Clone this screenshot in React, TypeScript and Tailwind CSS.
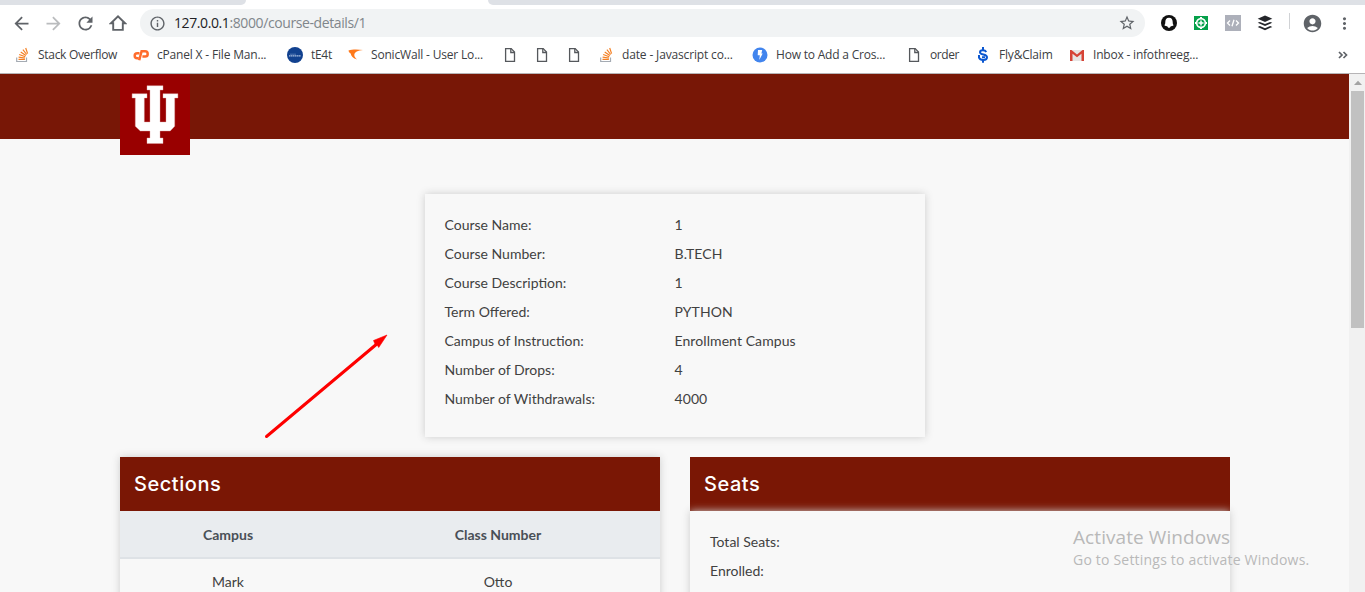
import React from "react";
import {
  MdAccountCircle,
  MdArrowBack,
  MdArrowForward,
  MdInfoOutline,
  MdMoreVert,
  MdRefresh,
  MdStarBorder,
} from "react-icons/md";

const StackIcon = () => (
  <svg viewBox="0 0 16 16" className="size-4" fill="none">
    <path d="M2.700 10.500v4h9.800v-4" stroke="#a5abb3" strokeWidth="1.200" />
    <path d="M4.500 12.400h6.400M4.600 10.100l6.400.9M5.200 7.500l6.100 2.300M6.700 4.900l5.200 3.700M8.900 2.700l3.800 4.800M11.700 1l1.900 5.600" stroke="#f48024" strokeWidth="1.200" />
  </svg>
);

const CpanelIcon = () => (
  <svg viewBox="0 0 16 16" className="size-4" fill="none" stroke="#ff6c2c" strokeWidth="2.500">
    <path d="M6.500 6.200H4.200a2.500 2.500 0 0 0 0 5h1.500" />
    <path d="M6.200 13.300 8.600 4.300h3.500a2.600 2.600 0 0 1 0 5.200H9.400" />
  </svg>
);

const Te4tIcon = () => (
  <svg viewBox="0 0 16 16" className="size-4">
    <circle cx="8" cy="8" r="8" fill="#11418f" />
    <path d="M2 8.800h12" stroke="#a9bedf" strokeWidth="1.200" strokeDasharray="1.500 .4" />
    <path d="M3 7.200h6" stroke="#5f83bd" strokeWidth=".8" />
  </svg>
);

const SonicIcon = () => (
  <svg viewBox="0 0 16 16" className="size-4">
    <path d="M1.500 3.500C5 2.200 11 2.200 16 3.100 11 3.600 7.300 5 7.300 8.100c0 1.600 1 3.200 2.900 4.500C6 11.300 3.900 9.200 3.700 6.600 2.500 6 1.700 4.800 1.500 3.500Z" fill="#ff791a" />
  </svg>
);

const FileIcon = () => (
  <svg viewBox="0 0 16 16" className="size-4" fill="none" stroke="#55585c" strokeWidth="1.300">
    <path d="M3.600 1.600h5.600l3.300 3.500v9.300H3.600Z" />
    <path d="M8.800 1.600v3.900h3.700" />
  </svg>
);

const BoltIcon = () => (
  <svg viewBox="0 0 16 16" className="size-4">
    <circle cx="8" cy="8" r="7.500" fill="#4285ee" />
    <path d="M6 3h4.200L9.400 6.400h1.300L7.300 13l.5-4.700H5.700Z" fill="#fff" />
  </svg>
);

const DollarIcon = () => (
  <svg viewBox="0 0 16 16" className="size-4" fill="none" stroke="#0b57d0">
    <path d="M11.300 4.900C9.900 2.600 5 2.700 5 5.200c0 3.300 7 1.300 7 5 0 3.600-6.700 3.700-8 .5V8" strokeWidth="2" />
    <path d="M8 0v3M8 12.500v3.200M7 10.200h3" strokeWidth="2" />
  </svg>
);

const MailIcon = () => (
  <svg viewBox="0 0 16 16" className="size-4">
    <path d="M1 3h14v11H1Z" fill="#e7e5e4" />
    <path d="M1 14V3h1.500L8 7.600 13.500 3H15v11h-2.500V6.700L8 10.300 3.500 6.700V14Z" fill="#d64336" />
  </svg>
);

type Bookmark = { icon: React.FC; label?: string; text?: string };

const bookmarks: Bookmark[] = [
  { icon: StackIcon, label: "Stack Overflow", text: "w-[79px] tracking-[-0.3px]" },
  { icon: CpanelIcon, label: "cPanel X - File Man...", text: "w-[114px] tracking-[-0.18px]" },
  { icon: Te4tIcon, label: "tE4t", text: "w-[20px] tracking-[-0.3px]" },
  { icon: SonicIcon, label: "SonicWall - User Lo...", text: "w-[115px] tracking-[-0.18px]" },
  { icon: FileIcon },
  { icon: FileIcon },
  { icon: FileIcon },
  { icon: StackIcon, label: "date - Javascript co...", text: "w-[114px] tracking-[-0.15px]" },
  { icon: BoltIcon, label: "How to Add a Cros...", text: "w-[114px] tracking-[-0.2px]" },
  { icon: FileIcon, label: "order", text: "w-[29px] tracking-[-0.4px]" },
  { icon: DollarIcon, label: "Fly&Claim", text: "w-[54px] tracking-[-0.2px]" },
  { icon: MailIcon, label: "Inbox - infothreeg...", text: "w-[105px] tracking-[-0.2px]" },
];

const courseRows = [
  ["Course Name:", "1"],
  ["Course Number:", "B.TECH"],
  ["Course Description:", "1"],
  ["Term Offered:", "PYTHON"],
  ["Campus of Instruction:", "Enrollment Campus"],
  ["Number of Drops:", "4"],
  ["Number of Withdrawals:", "4000"],
];

function Slot({ children }: { children: React.ReactNode }) {
  return <div className="flex w-8 shrink-0 items-center justify-center">{children}</div>;
}

function BrowserBar() {
  return (
    <div className="flex h-[74px] flex-col border-b border-[#b6b4b6] bg-white font-['Open_Sans',sans-serif]">
      <div className="flex h-[5px] shrink-0 justify-between">
        <div className="w-[246px] rounded-br-[6px] bg-[#dee1e6]" />
        <div className="w-[877px] rounded-bl-[6px] bg-[#dee1e6]" />
      </div>
      <div className="flex h-9 shrink-0 items-center pl-[5px] text-[#5f6368]">
        <Slot><MdArrowBack size={21} /></Slot>
        <Slot><MdArrowForward size={21} className="text-[#babcbe]" /></Slot>
        <Slot><MdRefresh size={21} /></Slot>
        <Slot>
          <svg viewBox="0 0 18 18" className="ml-0.5 size-[18px]" fill="none" stroke="currentColor" strokeWidth="1.900">
            <path d="M2 9.200 9 2.300l7 6.900h-2.200v6.700H4.200V9.200Z" />
          </svg>
        </Slot>
        <div className="ml-[7px] flex h-7 w-[1005px] shrink-0 items-center rounded-full bg-[#f1f3f4] pr-[9px] pl-[9px]">
          <MdInfoOutline size={17} />
          <div className="ml-2 flex-1 text-[14px] leading-none tracking-[-0.4px] whitespace-nowrap text-[#80868b]">
            <span className="text-[#202124]">127.0.0.1</span>:8000/course-details/1
          </div>
          <MdStarBorder size={18} />
        </div>
        <div className="ml-2 flex shrink-0">
          <Slot>
            <svg viewBox="0 0 16 16" className="size-4">
              <circle cx="8" cy="8" r="8" fill="#111" />
              <path d="M8 2.700c2.700 0 3.700 2 3.700 4.300 0 1.700.4 2.600 1 3.300-.9.6-1.800.8-2.900 1-.4.800-.8 1.500-1.800 1.500s-1.400-.7-1.800-1.500c-1.100-.2-2-.4-2.900-1C3.900 9.600 4.300 8.700 4.300 7c0-2.300 1-4.300 3.700-4.300Z" fill="#fff" />
            </svg>
          </Slot>
          <Slot>
            <svg viewBox="0 0 14 14" className="size-3.5">
              <path d="M0 0h14v14H0Z" fill="#05a04a" />
              <circle cx="7" cy="7" r="5.200" fill="#fff" />
              <path d="M7 1v1M7 12v1M1 7h1M12 7h1" stroke="#fff" strokeWidth="2" />
              <circle cx="7" cy="7" r="3.500" fill="#05a04a" />
              <path d="M7 4.500v5M4.500 7h5" stroke="#fff" strokeWidth="1.500" />
            </svg>
          </Slot>
          <Slot>
            <svg viewBox="0 0 16 16" className="size-4" fill="none">
              <path d="M0 0h16v16H0Z" fill="#adb0ba" />
              <path d="M5 5.500 2.500 8 5 10.500M11 5.500 13.500 8 11 10.500M9 4.700 7 11.300" stroke="#fff" strokeWidth="1.300" />
            </svg>
          </Slot>
          <Slot>
            <svg viewBox="0 0 16 16" className="size-4" fill="#24262b">
              <path d="m8 .5 7.300 3.200L8 7 .7 3.700Z" />
              <path d="m.7 7.800 2.100-.9L8 9.100l5.200-2.200 2.100.9L8 11.100Z" />
              <path d="m.7 11.900 2.100-.9L8 13.200l5.200-2.200 2.100.9L8 15.300Z" />
            </svg>
          </Slot>
          <div className="flex w-[15px] justify-end pr-1.5"><div className="h-4 w-px bg-[#d0d2d5]" /></div>
          <Slot><MdAccountCircle size={21} /></Slot>
          <Slot><MdMoreVert size={19} /></Slot>
        </div>
      </div>
      <div className="flex h-7 shrink-0 items-center gap-4 pl-3.5 text-[12px] leading-4 text-[#3c4043]">
        {bookmarks.map(({ icon: Icon, label, text }, i) => (
          <div key={i} className="flex shrink-0 items-center gap-2">
            <Icon />
            {label && <span className={`whitespace-nowrap ${text}`}>{label}</span>}
          </div>
        ))}
        <svg viewBox="0 0 10 8" className="mr-[17px] ml-auto h-2 w-2.5" fill="none" stroke="#5f6368" strokeWidth="1.700">
          <path d="m1 1 3 3-3 3M5.500 1l3 3-3 3" />
        </svg>
      </div>
    </div>
  );
}

function Logo() {
  return (
    <svg viewBox="0 0 70 81" className="h-[81px] w-[70px]">
      <path d="M0 0h70v81H0Z" fill="#990000" />
      <path
        d="M27 11.700h16v4.300h-3v32h6V24h-3v-4.300h14.900V24h-3.200v28.300L50.200 57H40v7h3v5.500H27V64h3v-7H20.300l-5-4.700V24h-3.200v-4.300H27V24h-2.700v24H30V16h-3Z"
        fill="#fff"
        stroke="#e0a8a8"
        strokeWidth=".4"
      />
    </svg>
  );
}

function PanelTitle({ children }: { children: React.ReactNode }) {
  return (
    <h2 className="flex h-[54px] items-center bg-[#7a1705] px-3.5 font-['Inter',sans-serif] text-[20px] font-medium tracking-[0.55px] text-white">
      {children}
    </h2>
  );
}

function CoursePage() {
  return (
    <main className="flex w-[1349px] shrink-0 flex-col overflow-hidden bg-[#f8f8f8] font-['Lato',sans-serif] text-[14px] text-[#414141]">
      <header className="h-[65px] shrink-0 bg-[#781706] pl-[120px]">
        <Logo />
      </header>
      <section className="mx-auto mt-[55px] h-[243px] w-[500px] shrink-0 bg-[#f8f8f8] px-5 pt-4 shadow-[0_0_8px_#ccc]">
        {courseRows.map(([name, value]) => (
          <div key={name} className="flex h-[29px] items-center">
            <span className="w-[230px]">{name}</span>
            <span className="tracking-[0.08px]">{value}</span>
          </div>
        ))}
      </section>
      <div className="mt-5 flex gap-[30px] pl-[120px]">
        <section className="h-[300px] w-[540px] shadow-[0_0_8px_#ccc]">
          <PanelTitle>Sections</PanelTitle>
          <div className="grid h-12 grid-cols-[216px_324px] items-center border-b-2 border-[#dee2e6] bg-[#e9ecef] text-center font-bold text-[#495057]">
            <span>Campus</span>
            <span>Class Number</span>
          </div>
          <div className="grid h-11 grid-cols-[216px_324px] items-center text-center">
            <span>Mark</span>
            <span>Otto</span>
          </div>
        </section>
        <section className="w-[540px]">
          <PanelTitle>Seats</PanelTitle>
          <div className="h-[240px] bg-[#f8f8f8] px-5 pt-4 shadow-[0_0_8px_#ccc]">
            <div className="flex h-[29px] items-center">Total Seats:</div>
            <div className="flex h-[29px] items-center">Enrolled:</div>
          </div>
        </section>
      </div>
    </main>
  );
}

export default function App() {
  return (
    <div className="relative flex h-[592px] w-[1365px] flex-col overflow-hidden bg-white">
      <BrowserBar />
      <div className="flex min-h-0 flex-1">
        <CoursePage />
        <div className="flex w-4 flex-col items-center bg-[#f1f1f1] pl-px">
          <svg viewBox="0 0 14 17" className="h-[17px] w-3.5">
            <path d="m3 11 4-4.200 4 4.200Z" fill="#a3a3a3" />
          </svg>
          <div className="h-[237px] w-[13px] bg-[#c1c1c1]" />
        </div>
      </div>
      <svg viewBox="0 0 130 110" className="absolute top-[330px] left-[260px] h-[110px] w-[130px]">
        <path d="M6.500 106.500 118 13" stroke="#fe0000" strokeWidth="3" strokeLinecap="round" />
        <path d="M127 5 113.500 10.500l1.500 3.500 2 .5 1.700 3Z" fill="#fe0000" stroke="#fe0000" strokeWidth=".6" />
      </svg>
      <div className="absolute top-[524px] left-[1073px] font-['Open_Sans',sans-serif] whitespace-nowrap text-[#b9b9b9]">
        <div className="text-[19px] leading-[26px] tracking-[0.08px]">Activate Windows</div>
        <div className="text-[14px] leading-5 tracking-[0.2px]">Go to Settings to activate Windows.</div>
      </div>
    </div>
  );
}
